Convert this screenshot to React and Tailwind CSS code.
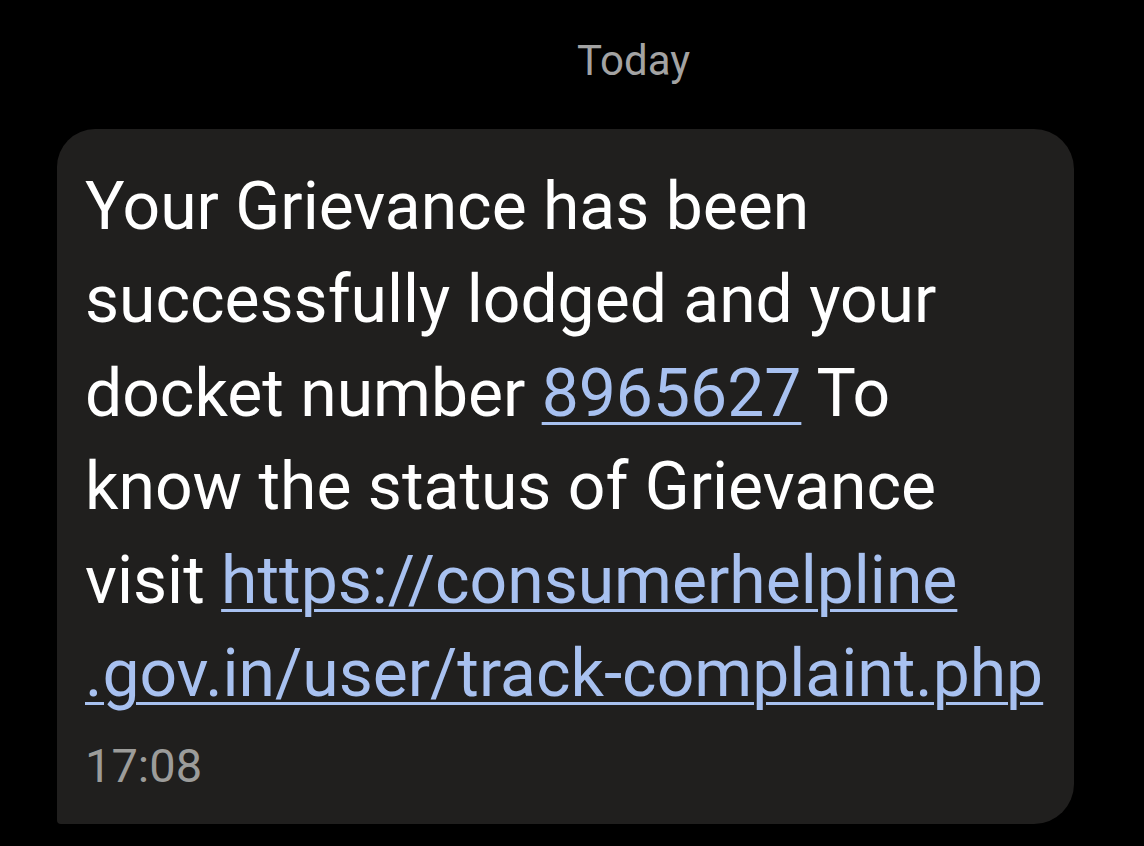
export default function App() {
  return (
    <div className="min-h-[846px] w-full bg-black font-['Roboto','Liberation_Sans',sans-serif] overflow-hidden">
      <div className="pt-[36px] h-[129px] pl-[577px]">
        <span className="text-[42px] leading-[50px] text-[#a3a3a3]">Today</span>
      </div>

      <div className="ml-[57px] w-[1017px] h-[695px] bg-[#201f1e] rounded-tl-[38px] rounded-tr-[40px] rounded-br-[40px] rounded-bl-[4px] pl-[28px] pt-[31px]">
        <p className="text-[66px] leading-[93.4px] text-white">
          Your Grievance has been
          <br />
          successfully lodged and your
          <br />
          docket number{" "}
          <a className="text-[#a8c1f0] underline decoration-3 underline-offset-[6px]">8965627</a> To
          <br />
          know the status of Grievance
          <br />
          visit{" "}
          <a className="text-[#a8c1f0] underline decoration-3 underline-offset-[6px]">
            https://consumerhelpline
            <br />
            .gov.in/user/track-complaint.php
          </a>
        </p>
        <div className="mt-[18px] text-[47px] leading-[56px] text-[#9c9c9a]">17:08</div>
      </div>
    </div>
  );
}
